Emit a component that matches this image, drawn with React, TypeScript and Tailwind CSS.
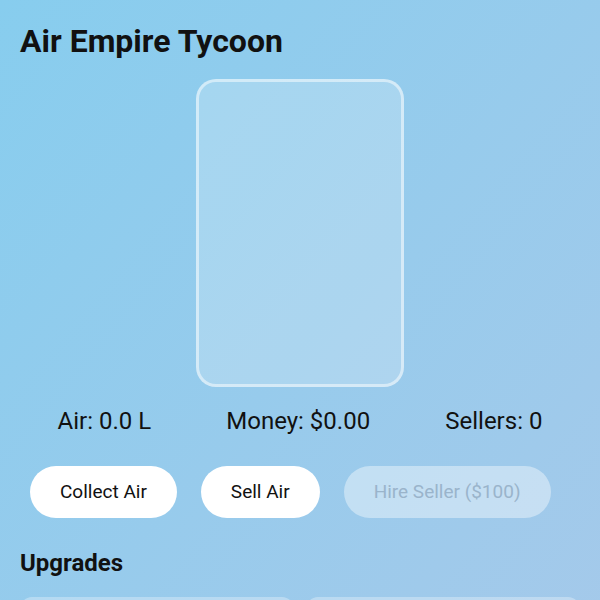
import { useState } from "react";

const App = () => {
  const [air, setAir] = useState(0);
  const [money, setMoney] = useState(0);
  const [sellers] = useState(0);

  const collectAir = () => setAir((a) => a + 1);
  const sellAir = () => {
    setMoney((m) => m + air * 0.5);
    setAir(0);
  };

  const canHire = money >= 100;

  return (
    <div
      className="min-h-screen bg-gradient-to-br from-[#87cdee] to-[#a6c9ea] px-5 pt-[22px] text-[#111]"
      style={{ fontFamily: "Roboto, 'Noto Sans', sans-serif" }}
    >
      <h1 className="text-[32px] font-bold leading-[38px]">Air Empire Tycoon</h1>

      <div className="flex justify-center mt-[19px]">
        <div className="w-[208px] h-[308px] rounded-[20px] border-[3px] border-white/50 bg-white/20" />
      </div>

      <div className="flex justify-around mt-[19px] text-[24px] leading-[30px]">
        <span>Air: {air.toFixed(1)} L</span>
        <span>Money: ${money.toFixed(2)}</span>
        <span>Sellers: {sellers}</span>
      </div>

      <div className="flex gap-6 mt-[30px] pl-[10px]">
        <button
          onClick={collectAir}
          className="bg-white rounded-full px-[30px] py-[15px] text-[19px] leading-[22px]"
        >
          Collect Air
        </button>
        <button
          onClick={sellAir}
          className="bg-white rounded-full px-[30px] py-[15px] text-[19px] leading-[22px]"
        >
          Sell Air
        </button>
        <button
          disabled={!canHire}
          className="bg-white/40 text-[#9ab4cb] rounded-full px-[30px] py-[15px] text-[19px] leading-[22px]"
        >
          Hire Seller ($100)
        </button>
      </div>

      <h2 className="text-[24px] font-bold leading-[30px] mt-[30px]">Upgrades</h2>

      <div className="grid grid-cols-2 gap-3 mt-[19px]">
        <div className="h-[120px] rounded-xl bg-white/30" />
        <div className="h-[120px] rounded-xl bg-white/30" />
      </div>
    </div>
  );
};

export default App;
